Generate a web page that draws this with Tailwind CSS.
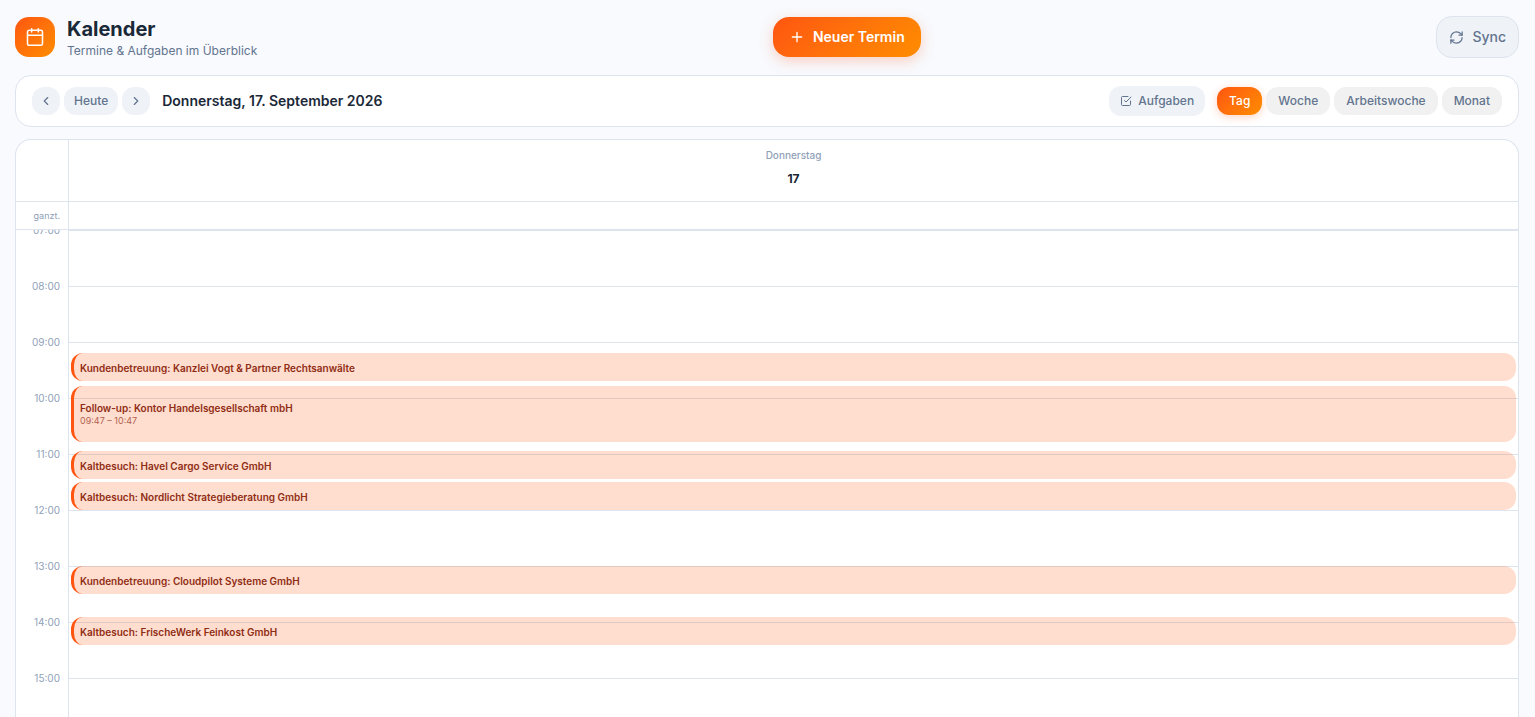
<!DOCTYPE html>
<html lang="de">
<head>
<meta charset="utf-8">
<meta name="viewport" content="width=device-width, initial-scale=1">
<title>Kalender</title>
<script src="https://cdn.jsdelivr.net/npm/@tailwindcss/browser@4"></script>
</head>
<body class="flex h-screen flex-col overflow-hidden bg-[#f8fafe] pt-[15px] pr-4 pl-[15px] font-['Inter',sans-serif] text-[#1a2838]">
  <header class="mb-4 flex shrink-0 items-center justify-between">
    <div class="flex items-center gap-3">
      <div class="flex size-10 items-center justify-center rounded-[14px] bg-linear-135 from-[#ff5510] to-[#ff8c00] text-white">
        <svg class="size-5" viewBox="0 0 24 24" fill="none" stroke="currentColor" stroke-width="1.8" stroke-linecap="round" stroke-linejoin="round" aria-hidden="true"><path d="M8 2v4M16 2v4M3 10h18"/><rect x="3" y="4" width="18" height="18" rx="2"/></svg>
      </div>
      <div>
        <h1 class="text-xl leading-7 font-bold">Kalender</h1>
        <p class="text-xs leading-4 text-slate-500">Termine &amp; Aufgaben im Überblick</p>
      </div>
    </div>
    <button type="button" class="flex h-10 items-center gap-2 rounded-2xl bg-linear-135 from-[#ff5510] to-[#ff8c00] px-4 text-sm font-semibold text-white shadow-[0_4px_14px_rgba(255,85,16,0.25)]">
      <svg class="size-4" viewBox="0 0 24 24" fill="none" stroke="currentColor" stroke-width="2" stroke-linecap="round" aria-hidden="true"><path d="M5 12h14M12 5v14"/></svg>
      Neuer Termin
    </button>
    <button type="button" class="flex h-[42px] items-center gap-2 rounded-2xl border border-[#dde4ee] bg-[#eff3f8] px-3 text-sm font-medium text-slate-500">
      <svg class="size-[15px]" viewBox="0 0 24 24" fill="none" stroke="currentColor" stroke-width="2" stroke-linecap="round" stroke-linejoin="round" aria-hidden="true"><path d="M3 12a9 9 0 0 1 9-9 9.75 9.75 0 0 1 6.74 2.74L21 8"/><path d="M21 3v5h-5"/><path d="M21 12a9 9 0 0 1-9 9 9.75 9.75 0 0 1-6.74-2.74L3 16"/><path d="M8 16H3v5"/></svg>
      Sync
    </button>
  </header>

  <div class="mb-3 flex h-[52px] shrink-0 items-center justify-between rounded-2xl border border-[#dde4ee] bg-white px-4">
    <div class="flex items-center gap-1 text-xs font-medium text-slate-500">
      <button type="button" aria-label="Zurück" class="flex size-7 items-center justify-center rounded-xl bg-[#eff3f8]">
        <svg class="size-3.5" viewBox="0 0 24 24" fill="none" stroke="currentColor" stroke-width="2" stroke-linecap="round" stroke-linejoin="round" aria-hidden="true"><path d="m15 18-6-6 6-6"/></svg>
      </button>
      <button type="button" class="h-7 rounded-xl bg-[#eff3f8] px-2.5">Heute</button>
      <button type="button" aria-label="Weiter" class="flex size-7 items-center justify-center rounded-xl bg-[#eff3f8]">
        <svg class="size-3.5" viewBox="0 0 24 24" fill="none" stroke="currentColor" stroke-width="2" stroke-linecap="round" stroke-linejoin="round" aria-hidden="true"><path d="m9 18 6-6-6-6"/></svg>
      </button>
      <h2 class="ml-2 text-sm font-semibold text-[#1a2838]">Donnerstag, 17. September 2026</h2>
    </div>
    <div class="flex items-center gap-3 text-xs font-medium text-slate-500">
      <button type="button" class="flex h-[30px] items-center gap-1.5 rounded-xl bg-[#eff3f8] px-[11px]">
        <svg class="size-3" viewBox="0 0 24 24" fill="none" stroke="currentColor" stroke-width="2" stroke-linecap="round" stroke-linejoin="round" aria-hidden="true"><path d="m9 11 3 3L22 4"/><path d="M21 12v7a2 2 0 0 1-2 2H5a2 2 0 0 1-2-2V5a2 2 0 0 1 2-2h11"/></svg>
        Aufgaben
      </button>
      <div class="flex gap-1">
        <button type="button" class="h-7 rounded-xl bg-linear-135 from-[#ff5510] to-[#ff8c00] px-3 text-white shadow-[0_2px_8px_rgba(255,85,16,0.25)]">Tag</button>
        <button type="button" class="h-7 rounded-xl bg-[#f1f1f1] px-3">Woche</button>
        <button type="button" class="h-7 rounded-xl bg-[#f1f1f1] px-3">Arbeitswoche</button>
        <button type="button" class="h-7 rounded-xl bg-[#f1f1f1] px-3">Monat</button>
      </div>
    </div>
  </div>

  <main class="flex min-h-0 flex-1 flex-col overflow-hidden rounded-t-2xl border border-b-0 border-[#dde4ee] bg-white text-[10px] text-slate-400">
    <div class="flex h-[62px] shrink-0 border-b border-[#dde4ee]">
      <div class="w-[53px] border-r border-[#dde4ee]"></div>
      <div class="flex flex-1 flex-col items-center pt-2">
        <span class="leading-[15px] font-medium">Donnerstag</span>
        <span class="mt-1 flex size-6 items-center justify-center text-xs font-bold text-[#1a2838]">17</span>
      </div>
    </div>
    <div class="flex h-7 shrink-0 border-b border-[#dde4ee]">
      <div class="flex w-[53px] items-center justify-end border-r border-[#dde4ee] pr-2 text-[9px]">ganzt.</div>
    </div>
    <div class="flex min-h-0 flex-1 overflow-hidden">
      <div class="w-[53px] shrink-0 border-r border-[#dde4ee] pr-2 text-right leading-4">
        <div class="-mt-2 h-14">07:00</div>
        <div class="h-14">08:00</div>
        <div class="h-14">09:00</div>
        <div class="h-14">10:00</div>
        <div class="h-14">11:00</div>
        <div class="h-14">12:00</div>
        <div class="h-14">13:00</div>
        <div class="h-14">14:00</div>
        <div class="h-14">15:00</div>
      </div>
      <div class="relative flex-1">
        <div class="h-14 border-t border-[#dde4ee]"></div>
        <div class="h-14 border-t border-[#dde4ee]"></div>
        <div class="h-14 border-t border-[#dde4ee]"></div>
        <div class="h-14 border-t border-[#dde4ee]"></div>
        <div class="h-14 border-t border-[#dde4ee]"></div>
        <div class="h-14 border-t border-[#dde4ee]"></div>
        <div class="h-14 border-t border-[#dde4ee]"></div>
        <div class="h-14 border-t border-[#dde4ee]"></div>
        <div class="h-14 border-t border-[#dde4ee]"></div>
        <div class="text-[10px] leading-[13px] font-semibold text-[#8f2d14]">
          <article class="absolute inset-x-0.5 flex h-7 flex-col justify-center rounded-xl border-l-3 border-[#ff5510] bg-[#ff5510]/20 px-1.5 pt-0.5" style="top:123px">Kundenbetreuung: Kanzlei Vogt &amp; Partner Rechtsanwälte</article>
          <article class="absolute inset-x-0.5 flex h-14 flex-col justify-center rounded-xl border-l-3 border-[#ff5510] bg-[#ff5510]/20 px-1.5" style="top:156px">Follow-up: Kontor Handelsgesellschaft mbH
            <span class="text-[9px] leading-3 font-normal opacity-70">09:47 – 10:47</span>
          </article>
          <article class="absolute inset-x-0.5 flex h-7 flex-col justify-center rounded-xl border-l-3 border-[#ff5510] bg-[#ff5510]/20 px-1.5 pt-0.5" style="top:221px">Kaltbesuch: Havel Cargo Service GmbH</article>
          <article class="absolute inset-x-0.5 flex h-7 flex-col justify-center rounded-xl border-l-3 border-[#ff5510] bg-[#ff5510]/20 px-1.5 pt-0.5" style="top:252px">Kaltbesuch: Nordlicht Strategieberatung GmbH</article>
          <article class="absolute inset-x-0.5 flex h-7 flex-col justify-center rounded-xl border-l-3 border-[#ff5510] bg-[#ff5510]/20 px-1.5 pt-0.5" style="top:336px">Kundenbetreuung: Cloudpilot Systeme GmbH</article>
          <article class="absolute inset-x-0.5 flex h-7 flex-col justify-center rounded-xl border-l-3 border-[#ff5510] bg-[#ff5510]/20 px-1.5 pt-0.5" style="top:387px">Kaltbesuch: FrischeWerk Feinkost GmbH</article>
        </div>
      </div>
    </div>
  </main>
</body>
</html>
